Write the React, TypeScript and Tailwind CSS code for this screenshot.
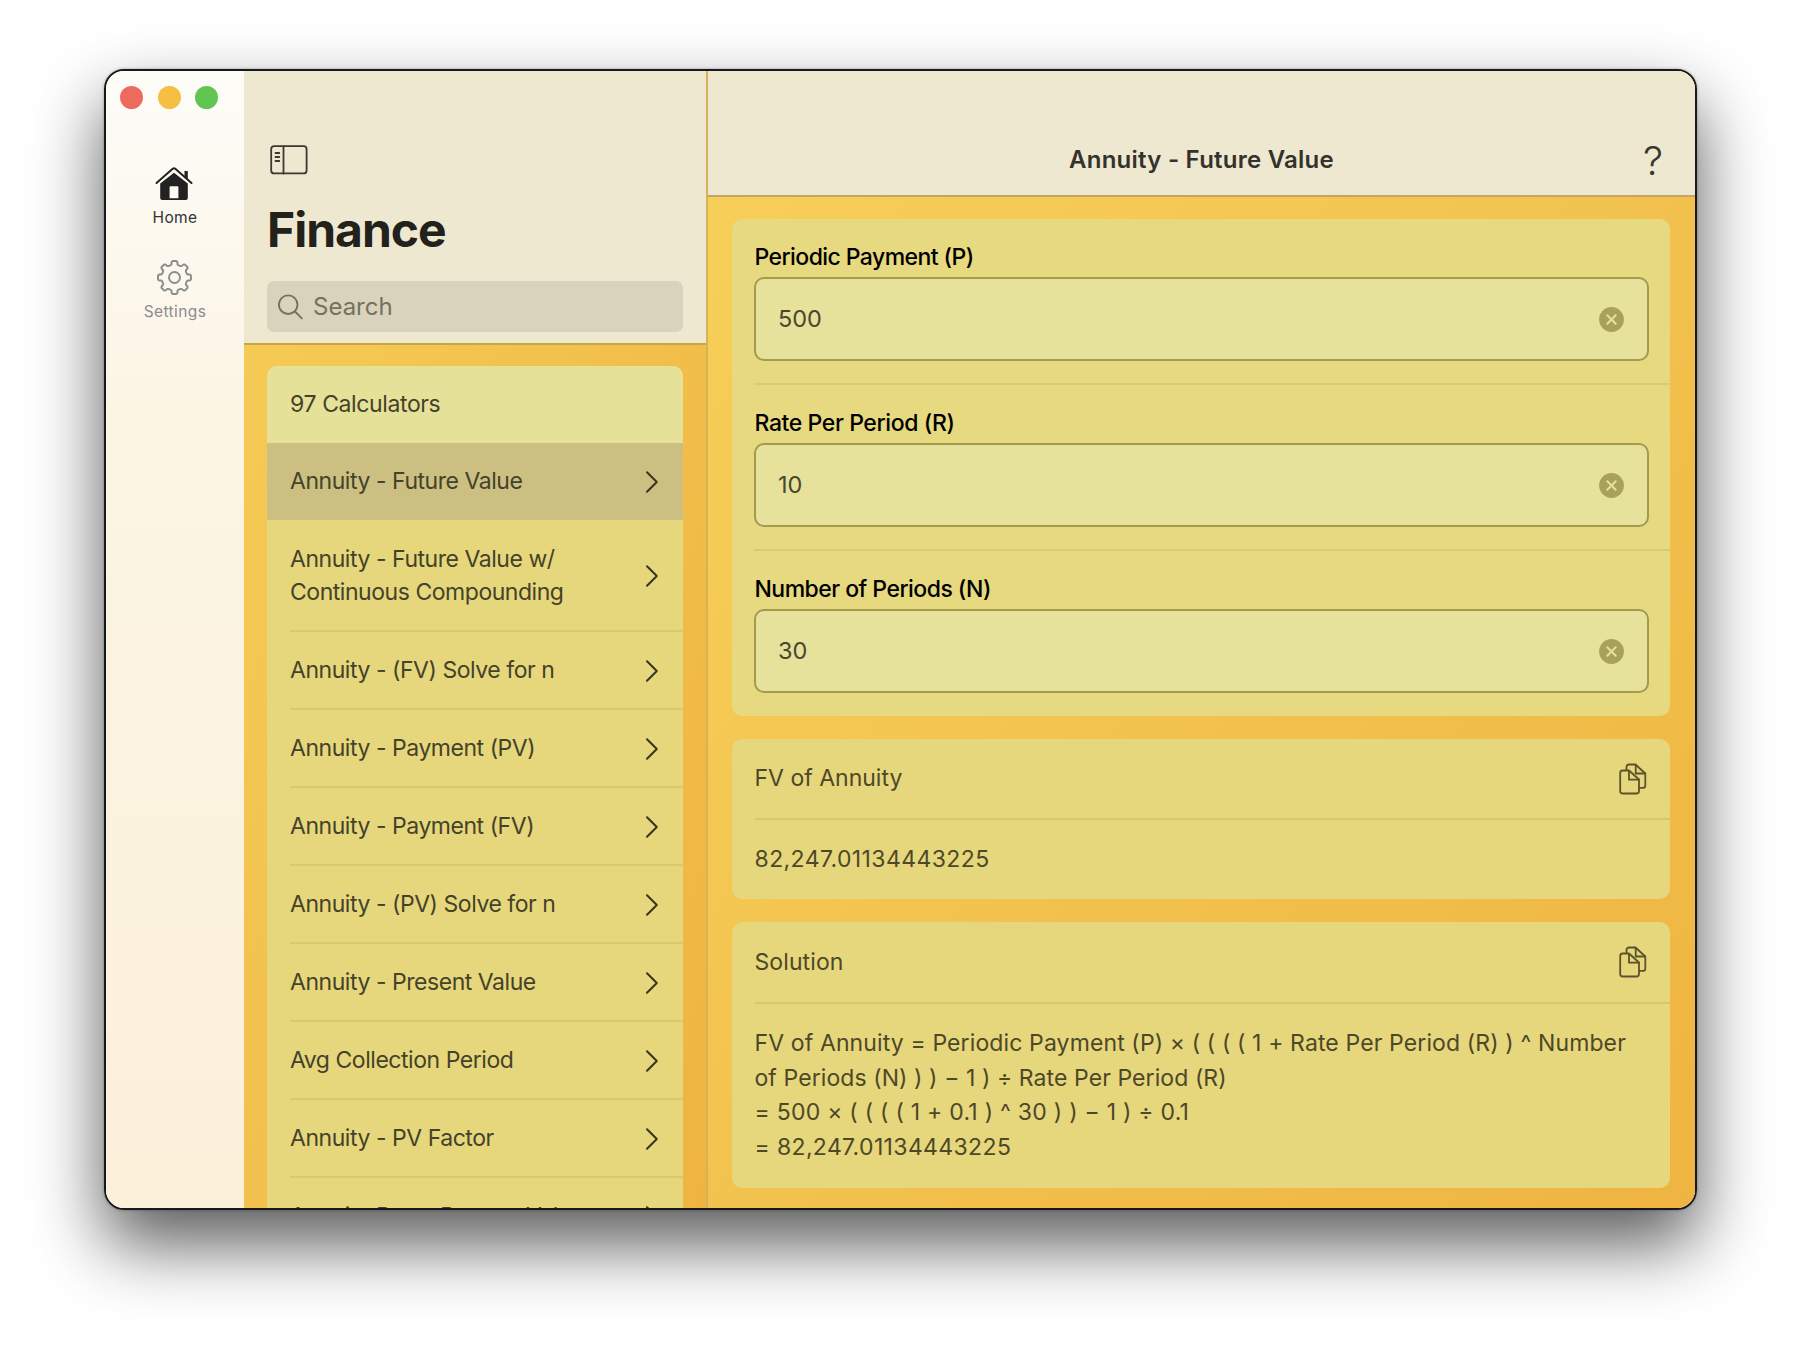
import React from "react";

const calculators = [
  "Annuity - (FV) Solve for n",
  "Annuity - Payment (PV)",
  "Annuity - Payment (FV)",
  "Annuity - (PV) Solve for n",
  "Annuity - Present Value",
  "Avg Collection Period",
  "Annuity - PV Factor",
  "Annuity Due - Present Value",
];

const fields = [
  { label: "Periodic Payment (P)", value: "500", tracking: "tracking-[-0.57px]" },
  { label: "Rate Per Period (R)", value: "10", tracking: "tracking-[-0.4px]" },
  { label: "Number of Periods (N)", value: "30", tracking: "tracking-[-0.53px]" },
];

function Chevron() {
  return (
    <svg className="mr-[24px] h-[24px] w-[14px] shrink-0" viewBox="0 0 14 24" fill="none" stroke="#37351f" strokeWidth="2" strokeLinecap="round" strokeLinejoin="round">
      <path d="M2 2.2 11.8 12 2 21.8" />
    </svg>
  );
}

function HomeIcon() {
  return (
    <svg className="mr-[2px] h-[35px] w-[38px]" viewBox="0 0 38 35">
      <path d="M5.200 17.500 19 6.700l13.800 10.800V32a2 2 0 0 1-2 2H7.200a2 2 0 0 1-2-2zM14.600 21.200V32.300h8.800V21.200a1 1 0 0 0-1-1h-6.800a1 1 0 0 0-1 1z" fill="#222" fillRule="evenodd" />
      <path d="M1.500 17 17.700 2.800a2 2 0 0 1 2.600 0L36.500 17" fill="none" stroke="#222" strokeWidth="2" strokeLinecap="round" />
      <path d="M29.500 5h3.300v8.500l-3.300-3z" fill="#222" />
    </svg>
  );
}

function GearIcon() {
  const teeth = 8;
  const pts: string[] = [];
  for (let i = 0; i < teeth; i++) {
    const base = (i * 2 * Math.PI) / teeth - Math.PI / 2;
    const spots: [number, number][] = [[-0.29, 12.9], [-0.22, 13.5], [-0.19, 15.6], [-0.12, 16.6], [0.12, 16.6], [0.19, 15.6], [0.22, 13.5], [0.29, 12.9]];
    for (const [a, r] of spots) {
      pts.push((17.5 + r * Math.cos(base + a)).toFixed(2) + "," + (17.5 + r * Math.sin(base + a)).toFixed(2));
    }
  }
  return (
    <svg className="mr-[1px] h-[35px] w-[35px]" viewBox="0 0 35 35" fill="none" stroke="#8b8b90" strokeWidth="1.900" strokeLinejoin="round">
      <polygon points={pts.join(" ")} />
      <circle cx="17.5" cy="17.5" r="5.500" />
    </svg>
  );
}

function SidebarIcon() {
  return (
    <svg className="h-[30px] w-[38px]" viewBox="0 0 38 30" fill="none" stroke="#3b392f" strokeWidth="1.800" strokeLinecap="round">
      <rect x="1.200" y="1.200" width="35.400" height="27.200" rx="3" />
      <path d="M13.500 1.500v27M5.500 8h3.800M5.500 12h3.800M5.500 16h3.800" />
    </svg>
  );
}

function CopyIcon() {
  return (
    <svg className="h-[32px] w-[28px]" viewBox="0 0 28 32" fill="none" stroke="#5a532c" strokeWidth="1.800" strokeLinejoin="round" strokeLinecap="round">
      <path d="M3.500 7.500h6.500L20 16.500V28a2.500 2.500 0 0 1-2.500 2.500h-13.800A2.500 2.500 0 0 1 1.200 28V10a2.500 2.500 0 0 1 2.300-2.500z" />
      <path d="M10 7.800v8.900h9.800" />
      <path d="M7.500 7V4a2.500 2.500 0 0 1 2.500-2.500h6.500l9.800 9v11.900a2.500 2.500 0 0 1-2.500 2.500H20.500" />
      <path d="M16.700 1.800v8.700h9.300" />
    </svg>
  );
}

function ClearIcon() {
  return (
    <svg className="h-[25px] w-[25px]" viewBox="0 0 25 25">
      <circle cx="12.500" cy="12.500" r="12.400" fill="#a7a15c" />
      <path d="M8.300 8.300l8.400 8.400M16.700 8.300l-8.400 8.400" stroke="#e6e19c" strokeWidth="2" strokeLinecap="round" />
    </svg>
  );
}

export default function App() {
  return (
    <div className="flex h-[1348px] w-[1800px] overflow-hidden bg-white pl-[104px] pt-[69px] font-['Inter',sans-serif]">
      <div className="flex h-[1141px] w-[1593px] overflow-hidden rounded-[20px] border-2 border-[#17191a] shadow-[0_0_3px_rgba(0,0,0,0.3),0_34px_70px_rgba(0,0,0,0.65)]">
        <nav className="flex w-[138px] shrink-0 flex-col bg-linear-to-b from-[#fdfcf8] via-[#fcf5e4] via-30% to-[#fbf0da]">
          <div className="flex gap-[14.500px] pl-[14px] pt-[15px]">
            <span className="size-[23px] rounded-full bg-[#ed6a5e]" />
            <span className="size-[23px] rounded-full bg-[#f5bf42]" />
            <span className="size-[23px] rounded-full bg-[#61c554]" />
          </div>
          <div className="mt-[57px] flex flex-col items-center text-[#333]">
            <HomeIcon />
            <span className="mt-[7px] text-[15.500px] leading-[20px] tracking-[0.4px]">Home</span>
          </div>
          <div className="mt-[32px] flex flex-col items-center text-[#8b8b90]">
            <GearIcon />
            <span className="mt-[7px] text-[15.500px] leading-[20px] tracking-[0.4px]">Settings</span>
          </div>
        </nav>

        <section className="flex w-[464px] shrink-0 flex-col border-r-2 border-[#d5b25c] bg-linear-to-br from-[#f6cd58] to-[#efb441]">
          <header className="h-[274px] shrink-0 border-b-2 border-[#c9a73f] bg-[#efe8d1] px-[23px]">
            <div className="pl-[3px] pt-[74px]"><SidebarIcon /></div>
            <h1 className="mt-[25px] text-[48px] font-bold leading-[60px] tracking-[-1px] text-[#22211c]">Finance</h1>
            <div className="mt-[21px] flex h-[51px] items-center rounded-[7px] bg-[#d9d2bc] pl-[11px] text-[#76715f]">
              <svg className="h-[26px] w-[26px]" viewBox="0 0 26 26" fill="none" stroke="#76715f" strokeWidth="1.900" strokeLinecap="round">
                <circle cx="10.200" cy="10.700" r="9.300" />
                <path d="M17 17.500l6.800 6.800" />
              </svg>
              <span className="ml-[9px] text-[24px]">Search</span>
            </div>
          </header>
          <div className="mx-[23px] mt-[21px] flex min-h-0 flex-1 flex-col overflow-hidden rounded-t-[10px] bg-[#e6d77c] text-[23px] leading-[33.500px] tracking-[-0.46px] text-[#45422a]">
            <div className="flex h-[77px] shrink-0 items-center bg-[#e6e199] pl-[23px] tracking-[-0.38px]">97 Calculators</div>
            <div className="flex h-[77px] shrink-0 items-center justify-between bg-[#cbc081] pl-[23px]">
              Annuity - Future Value
              <Chevron />
            </div>
            <div className="ml-[23px] flex h-[112px] shrink-0 items-center justify-between border-b-2 border-[#d6c970] pt-[2px]">
              <span>Annuity - Future Value w/<br />Continuous Compounding</span>
              <Chevron />
            </div>
            {calculators.map((name) => (
              <div key={name} className="ml-[23px] flex h-[78px] shrink-0 items-center justify-between border-b-2 border-[#d6c970] pt-[2px]">
                {name}
                <Chevron />
              </div>
            ))}
          </div>
        </section>

        <main className="flex min-w-0 flex-1 flex-col bg-linear-to-br from-[#f7d05a] via-[#f3c34f] to-[#efb441]">
          <header className="grid h-[126px] shrink-0 grid-cols-[60px_1fr_60px] border-b-2 border-[#c1a668] bg-[#efe8d1] pt-[71px]">
            <span />
            <h2 className="text-center text-[24px] font-semibold leading-[36px] tracking-[0.24px] text-[#33322d]">Annuity - Future Value</h2>
            <span className="pl-[8px] text-[40px] font-light leading-[38px] text-[#38372f]">?</span>
          </header>
          <div className="flex flex-col gap-[23px] pl-[24px] pr-[25px] pt-[22px] text-[23px]">
            <div className="flex h-[497px] flex-col rounded-[10px] bg-[#e6d97f]">
              {fields.map((f, i) => (
                <div key={f.label} className={i < 2 ? "ml-[22px] h-[166px] border-b-2 border-[#d8cc73] pr-[21px] pt-[19px]" : "ml-[22px] pr-[21px] pt-[19px]"}>
                  <label className={"block h-[39px] pl-[0.500px] leading-[38px] font-medium text-black " + f.tracking}>{f.label}</label>
                  <div className="flex h-[84px] items-center justify-between rounded-[10px] border-2 border-[#a39a50] bg-[#e6e19b] pl-[22px] pr-[23px] text-[23.500px] text-[#4a472f]">
                    <span>{f.value}</span>
                    <ClearIcon />
                  </div>
                </div>
              ))}
            </div>
            <div className="h-[160px] rounded-[10px] bg-[#e6d77c] pl-[22.500px] text-[#4d4828]">
              <div className="flex h-[81px] items-center justify-between border-b-2 border-[#d4c76f] pr-[23px]">FV of Annuity<CopyIcon /></div>
              <div className="flex h-[79px] items-center tracking-[0.400px]">82,247.01134443225</div>
            </div>
            <div className="h-[266px] rounded-[10px] bg-[#e6d67c] pl-[22.500px] text-[#4d4828]">
              <div className="flex h-[82px] items-center justify-between border-b-2 border-[#d4c76f] pr-[23px] tracking-[0.1px]">Solution<CopyIcon /></div>
              <p className="whitespace-nowrap pt-[22px] leading-[34.500px] tracking-[0.12px]">
                FV of Annuity = Periodic Payment (P) × ( ( ( ( 1 + Rate Per Period (R) ) ^ Number<br />
                <span className="tracking-[0.08px]">of Periods (N) ) ) − 1 ) ÷ Rate Per Period (R)</span><br />
                <span className="tracking-[0.25px]">= 500 × ( ( ( ( 1 + 0.1 ) ^ 30 ) ) − 1 ) ÷ 0.1</span><br />
                <span className="tracking-[0.36px]">= 82,247.01134443225</span>
              </p>
            </div>
          </div>
        </main>
      </div>
    </div>
  );
}
